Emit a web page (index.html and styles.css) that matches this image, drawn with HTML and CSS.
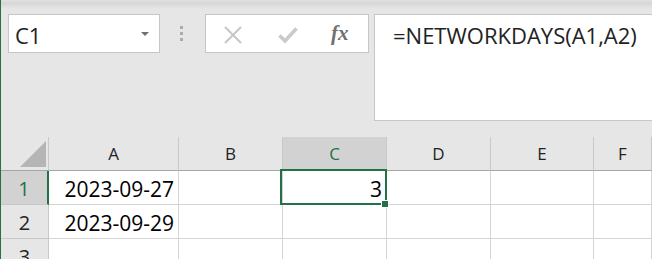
FILE: index.html
```html
<!DOCTYPE html>
<html>
<head>
<meta charset="utf-8">
<link rel="stylesheet" href="styles.css">
</head>
<body>
<div class="app">
  <div class="toolbar">
    <div class="namebox">
      <span class="name">C1</span>
      <span class="caret"></span>
    </div>
    <div class="grip"><i></i><i></i><i></i></div>
    <div class="fnbox">
      <svg class="ico-x" width="20" height="18" viewBox="0 0 20 18"><path d="M2 1 L18 17 M18 1 L2 17" stroke="#c6c6c6" stroke-width="2" fill="none"/></svg>
      <svg class="ico-ok" width="20" height="18" viewBox="0 0 20 18"><path d="M1.5 9.5 L7 15 L18.5 2.5" stroke="#cacaca" stroke-width="3.6" fill="none"/></svg>
      <span class="fx">fx</span>
    </div>
    <div class="formula">=NETWORKDAYS(A1,A2)</div>
  </div>
  <div class="sheet">
    <div class="hdr corner"><span class="tri"></span></div>
    <div class="hdr col">A</div>
    <div class="hdr col">B</div>
    <div class="hdr col sel">C</div>
    <div class="hdr col">D</div>
    <div class="hdr col">E</div>
    <div class="hdr col">F</div>

    <div class="hdr row sel">1</div>
    <div class="cell num">2023-09-27</div>
    <div class="cell"></div>
    <div class="cell num active">3<span class="handle"></span></div>
    <div class="cell"></div>
    <div class="cell"></div>
    <div class="cell"></div>

    <div class="hdr row">2</div>
    <div class="cell num">2023-09-29</div>
    <div class="cell"></div>
    <div class="cell"></div>
    <div class="cell"></div>
    <div class="cell"></div>
    <div class="cell"></div>

    <div class="hdr row">3</div>
    <div class="cell"></div>
    <div class="cell"></div>
    <div class="cell"></div>
    <div class="cell"></div>
    <div class="cell"></div>
    <div class="cell"></div>
  </div>
</div>
</body>
</html>
```
FILE: styles.css
```css
html, body {
  margin: 0;
  padding: 0;
  height: 100%;
  overflow: hidden;
}
body {
  background: #e6e6e6;
  font-family: "Open Sans", "Noto Sans", sans-serif;
}
.app {
  border-left: 1px solid #217346;
  height: 100%;
  box-sizing: border-box;
}
.toolbar {
  height: 137px;
  box-sizing: border-box;
  padding: 14px 0 0 7px;
  display: flex;
  align-items: flex-start;
  background: linear-gradient(#e2e2e2 0px, #d6d6d6 3px, #e6e6e6 9px);
}
.namebox {
  width: 152px;
  height: 39px;
  box-sizing: border-box;
  border: 1px solid #c6c6c6;
  background: #fff;
  display: flex;
  align-items: center;
  justify-content: space-between;
  padding: 2px 10px 0 6px;
}
.name {
  font-size: 22px;
  color: #222;
}
.caret {
  width: 0;
  height: 0;
  border-left: 4px solid transparent;
  border-right: 4px solid transparent;
  border-top: 4px solid #707070;
  margin-top: -2px;
}
.grip {
  margin: 12px 0 0 20px;
  width: 3px;
  display: flex;
  flex-direction: column;
  gap: 3px;
}
.grip i {
  display: block;
  width: 3px;
  height: 3px;
  background: #acacac;
}
.fnbox {
  margin-left: 22px;
  width: 164px;
  height: 39px;
  box-sizing: border-box;
  border: 1px solid #c6c6c6;
  background: #fff;
  display: flex;
  align-items: center;
  padding: 0 0 0 17px;
}
.ico-x { margin-top: 2px; }
.ico-ok { margin-left: 35px; margin-top: 2px; }
.fx {
  margin-left: 33px;
  font-family: "Liberation Serif", serif;
  font-style: italic;
  font-weight: bold;
  font-size: 21px;
  color: #707070;
}
.formula {
  margin-left: 5px;
  flex: 1;
  height: 107px;
  box-sizing: border-box;
  border: 1px solid #c6c6c6;
  border-right: none;
  background: #fff;
  padding: 5px 0 0 18px;
  font-size: 22px;
  color: #222;
  white-space: nowrap;
}
.sheet {
  display: grid;
  grid-template-columns: 48px 130px 104px 104px 104px 103px 1fr;
  grid-template-rows: 34px 34px 34px 34px;
  background: #fff;
}
.hdr {
  background: #e6e6e6;
  color: #222;
  display: flex;
  align-items: center;
  justify-content: center;
  box-sizing: border-box;
}
.col {
  font-size: 17px;
  border-right: 1px solid #c8c8c8;
  border-bottom: 1px solid #a6a6a6;
}
.corner {
  border-right: 1px solid #c8c8c8;
  border-bottom: 1px solid #a6a6a6;
  align-items: flex-end;
  justify-content: flex-end;
  padding: 0 2px 3px 0;
}
.tri {
  width: 26px;
  height: 26px;
  background: #b5b5b5;
  clip-path: polygon(100% 0, 100% 100%, 0 100%);
}
.row {
  font-size: 20px;
  border-right: 1px solid #c8c8c8;
  border-bottom: 1px solid #c8c8c8;
  padding-top: 2px;
}
.hdr.sel {
  background: #d2d2d2;
  color: #217346;
}
.row.sel {
  border-right: 2px solid #217346;
}
.cell {
  box-sizing: border-box;
  border-right: 1px solid #d4d4d4;
  border-bottom: 1px solid #d4d4d4;
  font-size: 21px;
  color: #000;
  display: flex;
  align-items: center;
  padding: 2px 4px 0 4px;
  position: relative;
}
.num {
  justify-content: flex-end;
}
.active::after {
  content: "";
  position: absolute;
  top: -2px;
  left: -3px;
  right: -1px;
  bottom: -1px;
  border: 2px solid #217346;
  pointer-events: none;
}
.handle {
  position: absolute;
  right: -3px;
  bottom: -4px;
  width: 6px;
  height: 6px;
  background: #217346;
  border: 1px solid #fff;
  z-index: 2;
}
```
